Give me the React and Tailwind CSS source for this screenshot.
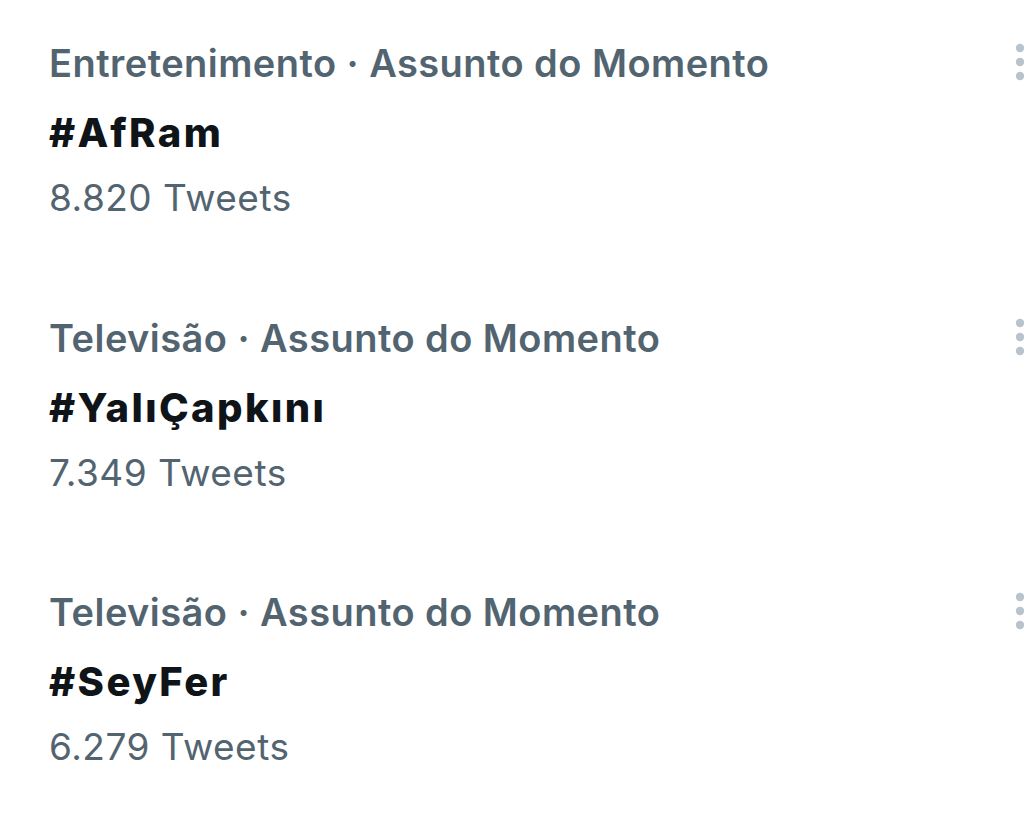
import React from 'react';

const trends = [
  { category: 'Entretenimento · Assunto do Momento', tag: '#AfRam', count: '8.820 Tweets' },
  { category: 'Televisão · Assunto do Momento', tag: '#YalıÇapkını', count: '7.349 Tweets' },
  { category: 'Televisão · Assunto do Momento', tag: '#SeyFer', count: '6.279 Tweets' },
];

const MoreIcon = () => (
  <svg width="10" height="38" viewBox="0 0 10 38" className="text-[#b9c3cb]" fill="currentColor">
    <circle cx="5" cy="5" r="4.2" />
    <circle cx="5" cy="19" r="4.2" />
    <circle cx="5" cy="33" r="4.2" />
  </svg>
);

const TrendItem = ({ trend }) => (
  <div className="relative pl-[49px] pt-[37px] h-[274.5px]">
    <div className="text-[38px] leading-[52px] font-semibold tracking-[0.45px] text-[#536471] whitespace-nowrap">
      {trend.category}
    </div>
    <div className="mt-[14px] text-[40px] leading-[60px] font-extrabold tracking-[2.4px] text-[#0f1419] whitespace-nowrap">
      {trend.tag}
    </div>
    <div className="mt-[5px] text-[37px] leading-[60px] tracking-[0.5px] text-[#536471] whitespace-nowrap">
      {trend.count}
    </div>
    <div className="absolute right-[11px] top-[43px]">
      <MoreIcon />
    </div>
  </div>
);

export default function App() {
  return (
    <div className="w-[1036px] h-[828px] overflow-hidden bg-white font-['Inter',sans-serif]">
      {trends.map((t, i) => (
        <TrendItem key={i} trend={t} />
      ))}
    </div>
  );
}
